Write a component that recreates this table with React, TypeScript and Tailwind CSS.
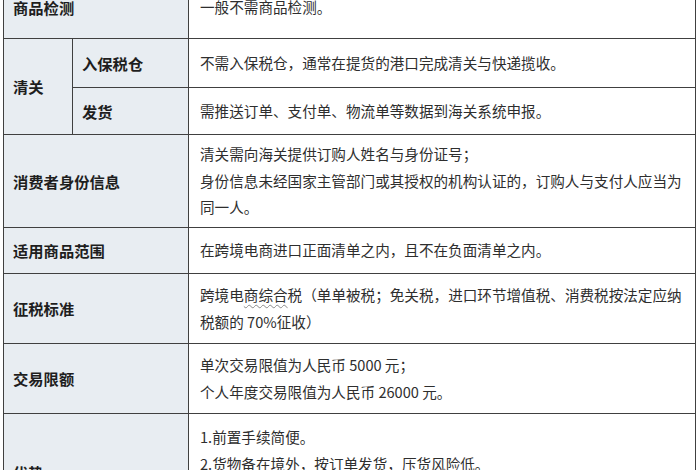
const font = { fontFamily: '"Microsoft YaHei", "Noto Sans CJK SC", "Noto Sans", sans-serif' };

function Label({ text, className = '' }: { text: string; className?: string }) {
  return (
    <div className={`flex items-center bg-[#e8edf2] pl-[9px] text-[15.3px] font-bold text-[#1e1e1e] ${className}`}>
      {text}
    </div>
  );
}

function Content({ lines, className = '' }: { lines: React.ReactNode[]; className?: string }) {
  return (
    <div className={`flex flex-col bg-white pl-[11px] text-[14.6px] leading-[26.5px] text-[#2e2e2e] ${className || 'justify-center'}`}>
      {lines.map((line, i) => (
        <div key={i} className="whitespace-nowrap">
          {line}
        </div>
      ))}
    </div>
  );
}

export default function App() {
  return (
    <div className="h-[470px] w-[700px] overflow-hidden bg-white" style={font}>
      <div className="ml-[3px] mt-[-25px] grid w-[693px] grid-cols-[68px_115px_506px] grid-rows-[62px_48px_46px_92px_45px_69px_69px_116px] gap-px bg-[#404040] p-px">
        <Label text="商品检测" className="col-span-2" />
        <Content lines={['一般不需商品检测。']} />

        <Label text="清关" className="row-span-2" />
        <Label text="入保税仓" />
        <Content lines={['不需入保税仓，通常在提货的港口完成清关与快递揽收。']} />
        <Label text="发货" />
        <Content lines={['需推送订单、支付单、物流单等数据到海关系统申报。']} />

        <Label text="消费者身份信息" className="col-span-2" />
        <Content
          lines={[
            '清关需向海关提供订购人姓名与身份证号；',
            '身份信息未经国家主管部门或其授权的机构认证的，订购人与支付人应当为',
            '同一人。',
          ]}
        />

        <Label text="适用商品范围" className="col-span-2" />
        <Content lines={['在跨境电商进口正面清单之内，且不在负面清单之内。']} />

        <Label text="征税标准" className="col-span-2" />
        <Content
          lines={[
            <>
              跨境电
              <span className="underline decoration-[#8a8a8a] decoration-wavy decoration-1 underline-offset-[3px]">商综合</span>
              税（单单被税；免关税，进口环节增值税、消费税按法定应纳
            </>,
            '税额的 70%征收）',
          ]}
        />

        <Label text="交易限额" className="col-span-2" />
        <Content lines={['单次交易限值为人民币 5000 元；', '个人年度交易限值为人民币 26000 元。']} />

        <Label text="优势" className="col-span-2" />
        <Content
          className="justify-start pt-[10px]"
          lines={['1.前置手续简便。', '2.货物备在境外，按订单发货，压货风险低。']}
        />
      </div>
    </div>
  );
}
